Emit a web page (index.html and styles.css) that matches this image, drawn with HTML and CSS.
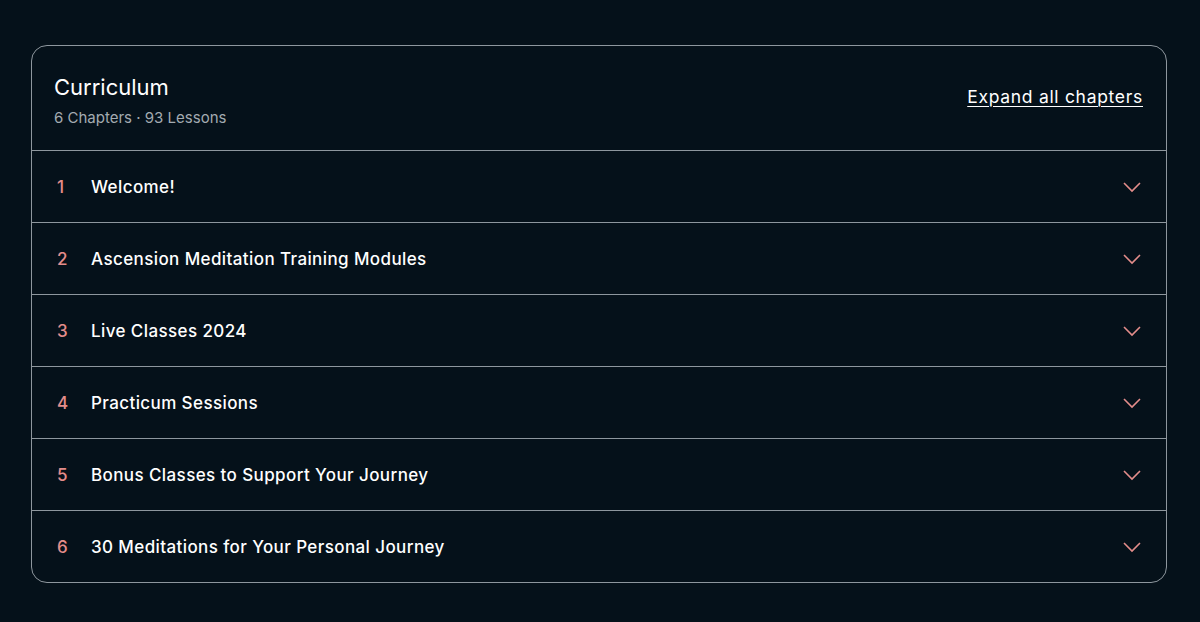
FILE: index.html
```html
<!DOCTYPE html>
<html>
<head>
<meta charset="utf-8">
<link rel="stylesheet" href="styles.css">
</head>
<body>
<div class="page">
  <section class="card">
    <header class="head">
      <div class="head-text">
        <h2 class="title">Curriculum</h2>
        <p class="sub">6 Chapters · 93 Lessons</p>
      </div>
      <a class="expand" href="#">Expand all chapters</a>
    </header>
    <div class="row"><span class="num">1</span><span class="name">Welcome!</span><svg class="chev" viewBox="0 0 20 12" width="20" height="12"><path d="M2 2 L10 10 L18 2" fill="none" stroke="#e48d8b" stroke-width="1.6"/></svg></div>
    <div class="row"><span class="num">2</span><span class="name">Ascension Meditation Training Modules</span><svg class="chev" viewBox="0 0 20 12" width="20" height="12"><path d="M2 2 L10 10 L18 2" fill="none" stroke="#e48d8b" stroke-width="1.6"/></svg></div>
    <div class="row"><span class="num">3</span><span class="name">Live Classes 2024</span><svg class="chev" viewBox="0 0 20 12" width="20" height="12"><path d="M2 2 L10 10 L18 2" fill="none" stroke="#e48d8b" stroke-width="1.6"/></svg></div>
    <div class="row"><span class="num">4</span><span class="name">Practicum Sessions</span><svg class="chev" viewBox="0 0 20 12" width="20" height="12"><path d="M2 2 L10 10 L18 2" fill="none" stroke="#e48d8b" stroke-width="1.6"/></svg></div>
    <div class="row"><span class="num">5</span><span class="name">Bonus Classes to Support Your Journey</span><svg class="chev" viewBox="0 0 20 12" width="20" height="12"><path d="M2 2 L10 10 L18 2" fill="none" stroke="#e48d8b" stroke-width="1.6"/></svg></div>
    <div class="row"><span class="num">6</span><span class="name">30 Meditations for Your Personal Journey</span><svg class="chev" viewBox="0 0 20 12" width="20" height="12"><path d="M2 2 L10 10 L18 2" fill="none" stroke="#e48d8b" stroke-width="1.6"/></svg></div>
  </section>
</div>
</body>
</html>
```
FILE: styles.css
```css
* { box-sizing: border-box; }
html, body { margin: 0; padding: 0; }
body {
  background: #05111a;
  font-family: Inter, "Noto Sans", sans-serif;
  color: #ffffff;
  width: 1200px;
  height: 622px;
  overflow: hidden;
}
.page { padding: 45px 33px 0 31px; }
.card {
  border: 1px solid #8e979e;
  border-radius: 16px;
  overflow: hidden;
}
.head {
  height: 105px;
  display: flex;
  align-items: center;
  justify-content: space-between;
  padding: 5px 23px 0 22px;
  border-bottom: 1px solid #8e979e;
}
.title {
  margin: 0;
  font-size: 22px;
  font-weight: 400;
  letter-spacing: 0;
  line-height: 28px;
}
.sub {
  margin: 6px 0 0 0;
  font-size: 15px;
  color: #a3abb1;
  line-height: 22px;
  letter-spacing: 0;
}
.expand {
  color: #ffffff;
  font-size: 17.5px;
  letter-spacing: 0.7px;
  text-decoration: underline;
  text-underline-offset: 3px;
  text-decoration-thickness: 1px;
  margin-bottom: 9px;
}
.row {
  height: 72px;
  display: flex;
  align-items: center;
  padding: 0 24px 0 25px;
  border-bottom: 1px solid #8e979e;
}
.row:last-child { border-bottom: none; height: 71px; }
.num {
  width: 34px;
  color: #e48d8b;
  font-size: 17px;
  font-weight: 500;
}
.name {
  flex: 1;
  font-size: 17px;
  font-weight: 500;
  letter-spacing: 0.4px;
}
.chev { display: block; }
```
